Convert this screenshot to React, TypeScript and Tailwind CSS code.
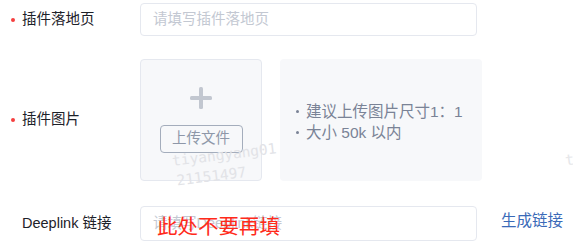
const font = { fontFamily: '"Liberation Sans", "Noto Sans CJK SC", sans-serif' };
const mono = { fontFamily: '"DejaVu Sans Mono", monospace' };

function Label({ text, required }: { text: string; required?: boolean }) {
  return (
    <div className="w-[140px] shrink-0 flex items-center pl-[22px] relative text-[14.5px] text-[#1d2129]">
      {required && <span className="absolute left-[11px] w-[4px] h-[4px] rounded-full bg-[#f53f3f]" />}
      {text}
    </div>
  );
}

export default function App() {
  return (
    <div className="w-[573px] h-[243px] bg-white relative overflow-hidden pt-[3px]" style={font}>
      <div className="flex h-[33px]">
        <Label text="插件落地页" required />
        <div className="w-[337px] h-[33px] border border-[#e5e8ef] rounded-[4px] flex items-center px-[12px] text-[14.5px] text-[#c3c8d2]">
          请填写插件落地页
        </div>
      </div>

      <div className="flex mt-[23px] h-[122px]">
        <Label text="插件图片" required />
        <div className="w-[122px] h-[122px] bg-[#f7f8fa] border border-[#e5e8ef] rounded-[4px] flex flex-col items-center pt-[27px]">
          <svg width="22" height="22" viewBox="0 0 22 22">
            <rect x="9" y="0" width="4" height="22" rx="1.5" fill="#c2c7d0" />
            <rect x="0" y="9" width="22" height="4" rx="1.5" fill="#c2c7d0" />
          </svg>
          <div className="mt-[16px] w-[83px] h-[28px] border border-[#a4adbc] rounded-[4px] flex items-center justify-center text-[14.5px] text-[#8e97a8]">
            上传文件
          </div>
        </div>
        <div className="ml-[18px] w-[202px] h-[122px] bg-[#f7f8fa] rounded-[4px] flex flex-col justify-center pl-[16px] pt-[4px] text-[15.5px] text-[#7a8396] leading-[21px]">
          <div className="flex items-center"><span className="w-[3px] h-[3px] bg-[#7a8396] rounded-full mr-[7px]" />建议上传图片尺寸1：1</div>
          <div className="flex items-center"><span className="w-[3px] h-[3px] bg-[#7a8396] rounded-full mr-[7px]" />大小 50k 以内</div>
        </div>
      </div>

      <div className="flex mt-[25px] h-[35px] items-center">
        <Label text="Deeplink 链接" />
        <div className="w-[337px] h-[35px] border border-[#e5e8ef] rounded-[4px] flex items-center px-[12px] text-[14.5px] text-[#c3c8d2] relative">
          请填写Deeplink链接
          <span className="absolute left-[16px] top-[8px] text-[20.5px] leading-[24px] text-[#ff2a1a]">此处不要再填</span>
        </div>
        <span className="ml-[24px] text-[15.5px] text-[#3a6ab8] -mt-[6px]">生成链接</span>
      </div>

      {/* watermark */}
      <div className="absolute left-[171px] top-[151px] -rotate-[7deg] origin-top-left text-[#e2e3e7] text-[14.5px] leading-[20px] pointer-events-none" style={mono}>
        <div>tiyangyang01</div>
        <div className="pl-[2px]">21151497</div>
      </div>
      <div className="absolute left-[565px] top-[150px] -rotate-[7deg] text-[#e6e7ea] text-[15px] leading-[20px]" style={mono}>t</div>
    </div>
  );
}
